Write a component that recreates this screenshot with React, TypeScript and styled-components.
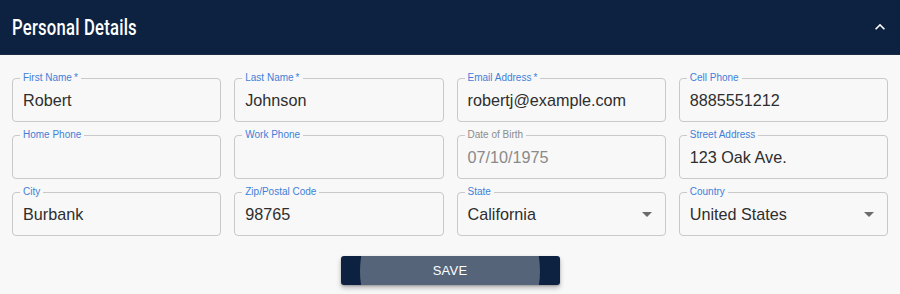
import React from "react";
import styled, { createGlobalStyle } from "styled-components";

const Global = createGlobalStyle`
  html, body { margin: 0; padding: 0; background: #f8f8f8; }
  body { font-family: "Liberation Sans", Arial, sans-serif; }
  * { box-sizing: border-box; }
`;

const Page = styled.div`
  width: 900px;
  height: 294px;
  background: #f8f8f8;
  display: flex;
  flex-direction: column;
`;

const Header = styled.div`
  height: 55px;
  background: #0c2240;
  display: flex;
  align-items: center;
  justify-content: space-between;
  padding: 0 12px 0 12px;
  border-bottom: 1px solid #1a2c46;
`;

const Title = styled.h2`
  margin: 0;
  color: #ffffff;
  font-family: Roboto, "Liberation Sans", sans-serif;
  font-weight: 500;
  font-size: 22.5px;
  letter-spacing: 0.3px;
  transform: scaleX(0.74);
  transform-origin: left center;
`;

const Toggle = styled.button`
  border: none;
  background: transparent;
  padding: 0;
  width: 20px;
  height: 20px;
  display: flex;
  align-items: center;
  justify-content: center;
  margin-right: -2px;
  cursor: pointer;
`;

const Form = styled.div`
  display: flex;
  flex-direction: column;
  align-items: center;
  padding: 23px 12px 0 12px;
`;

const Grid = styled.div`
  width: 100%;
  display: grid;
  grid-template-columns: repeat(4, 1fr);
  column-gap: 13px;
  row-gap: 13px;
`;

const Field = styled.div`
  position: relative;
  height: 44px;
  border: 1px solid #c9c9c9;
  border-radius: 4px;
  display: flex;
  align-items: center;
  padding: 0 10px;
`;

const Label = styled.span<{ $disabled?: boolean }>`
  position: absolute;
  left: 7px;
  top: -8px;
  padding: 0 3px;
  background: #f8f8f8;
  font-size: 10px;
  line-height: 13px;
  color: ${(p) => (p.$disabled ? "#8c8c8c" : "#3f7fd8")};
`;

const Value = styled.span<{ $disabled?: boolean }>`
  flex: 1;
  font-size: 16.2px;
  padding-top: 1px;
  color: ${(p) => (p.$disabled ? "#8a8a8a" : "#2e2e2e")};
`;

const Arrow = styled.span`
  width: 0;
  height: 0;
  border-left: 5px solid transparent;
  border-right: 5px solid transparent;
  border-top: 5px solid #6b6b6b;
  margin-right: 3px;
`;

const SaveButton = styled.button`
  position: relative;
  overflow: hidden;
  margin-top: 20px;
  width: 219px;
  height: 29px;
  border: none;
  border-radius: 3px;
  background: #0c2240;
  color: #ffffff;
  font-family: "Liberation Sans", Arial, sans-serif;
  font-weight: 400;
  font-size: 13px;
  letter-spacing: 0.2px;
  box-shadow: 0 3px 5px rgba(0, 0, 0, 0.25), 0 1px 2px rgba(0, 0, 0, 0.2);
  cursor: pointer;
`;

const Ripple = styled.span`
  position: absolute;
  left: 50%;
  top: 50%;
  width: 180px;
  height: 180px;
  margin-left: -90px;
  margin-top: -90px;
  border-radius: 50%;
  background: rgba(255, 255, 255, 0.3);
`;

const ButtonText = styled.span`
  position: relative;
`;

type F = { label: string; value?: string; required?: boolean; disabled?: boolean; select?: boolean };

const fields: F[] = [
  { label: "First Name", value: "Robert", required: true },
  { label: "Last Name", value: "Johnson", required: true },
  { label: "Email Address", value: "robertj@example.com", required: true },
  { label: "Cell Phone", value: "8885551212" },
  { label: "Home Phone" },
  { label: "Work Phone" },
  { label: "Date of Birth", value: "07/10/1975", disabled: true },
  { label: "Street Address", value: "123 Oak Ave." },
  { label: "City", value: "Burbank" },
  { label: "Zip/Postal Code", value: "98765" },
  { label: "State", value: "California", select: true },
  { label: "Country", value: "United States", select: true },
];

export default function App() {
  return (
    <>
      <Global />
      <Page>
        <Header>
          <Title>Personal Details</Title>
          <Toggle aria-label="collapse">
            <svg width="20" height="20" viewBox="0 0 24 24" fill="#ffffff">
              <path d="M12 8l-6 6 1.41 1.41L12 10.83l4.59 4.58L18 14z" />
            </svg>
          </Toggle>
        </Header>
        <Form>
          <Grid>
            {fields.map((f) => (
              <Field key={f.label}>
                <Label $disabled={f.disabled}>
                  {f.label}
                  {f.required ? "\u2009*" : ""}
                </Label>
                <Value $disabled={f.disabled}>{f.value ?? ""}</Value>
                {f.select && <Arrow />}
              </Field>
            ))}
          </Grid>
          <SaveButton>
            <Ripple />
            <ButtonText>SAVE</ButtonText>
          </SaveButton>
        </Form>
      </Page>
    </>
  );
}
